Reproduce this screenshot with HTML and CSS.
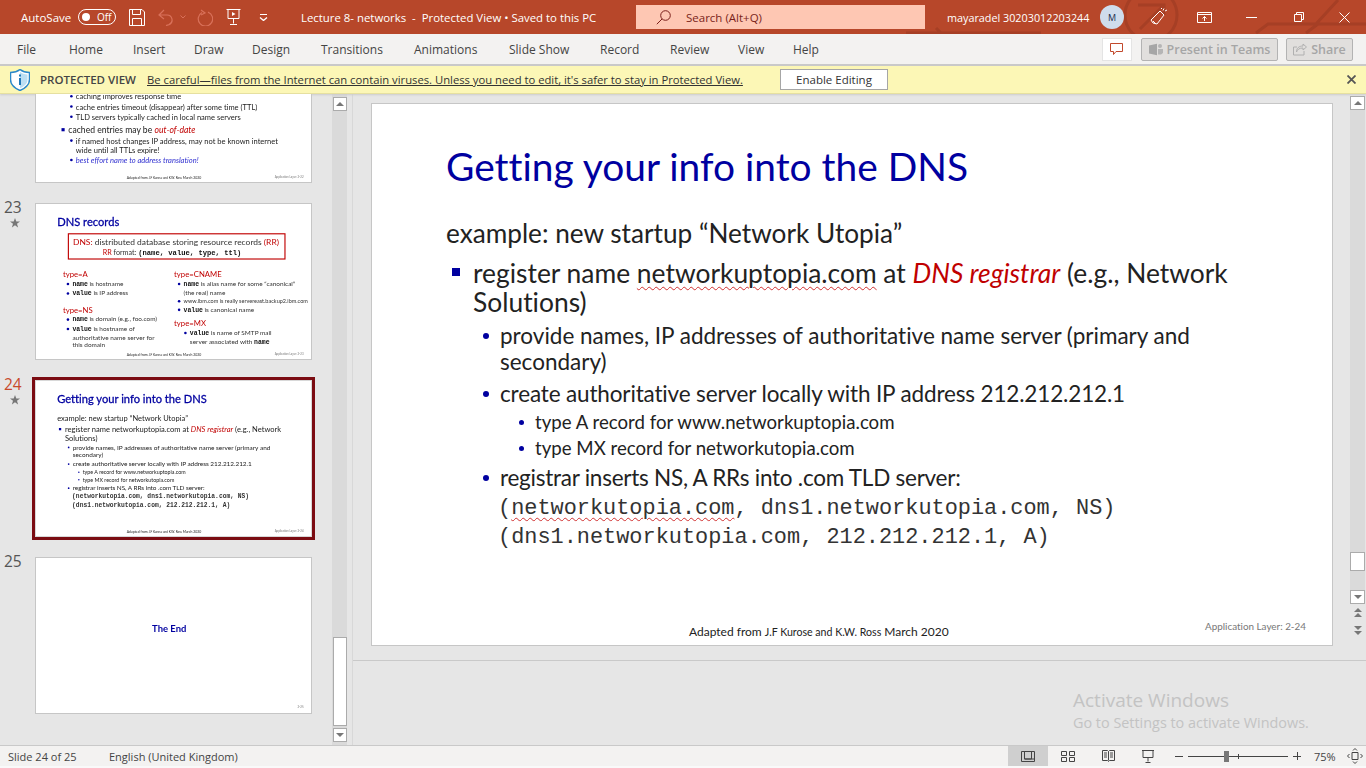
FILE: index.html
```html
<!DOCTYPE html>
<html lang="en">
<head>
<meta charset="utf-8">
<title>Lecture 8- networks</title>
<link rel="stylesheet" href="styles.css">
</head>
<body>
<div class="app">
  <header class="titlebar">
    <svg class="decor" width="460" height="34" viewBox="0 0 460 34" fill="none" stroke="#a63f25" stroke-width="3">
      <circle cx="245" cy="15" r="26"/>
      <path d="M232 5h26v10M256 7l-22 22"/>
      <path d="M0 33h135M30 28l5 5M350 33l12-9h48l22-24M400 33l12-9h48"/>
    </svg>
    <span class="autosave">AutoSave</span>
    <span class="toggle"><i class="knob"></i><span>Off</span></span>
    <svg class="ic save" width="16" height="17" viewBox="0 0 16 17" fill="none" stroke="#fff"><path d="M.5.5h12.5l2.500 2.500v13.500H.5zM3.500.500v5h8v-5M3.500 16.500v-7h9v7"/></svg>
    <svg class="ic undo" width="16" height="17" viewBox="0 0 16 17" fill="none" stroke="#d9715a" stroke-width="1.2"><path d="M6 1L1 6l5 4M1 6h8a5 5 0 0 1 2 9.600l-3 1"/></svg>
    <svg class="ic caret" width="6" height="4" viewBox="0 0 6 4" fill="none" stroke="#d9715a"><path d="M.5.500L3 3 5.500.500"/></svg>
    <svg class="ic redo" width="16" height="17" viewBox="0 0 16 17" fill="none" stroke="#d9715a" stroke-width="1.2"><path d="M4 1l4 3-4 2M5 3.500a7.200 7.200 0 1 0 6-.4"/></svg>
    <svg class="ic present" width="15" height="16" viewBox="0 0 15 16" fill="none" stroke="#fff"><path d="M.5 .5h14M2 .5v9h11v-9M7.500 9.500v5M4 15.500h7"/><path d="M6 3l3.500 2L6 7z" fill="#fff" stroke="none"/></svg>
    <svg class="ic more" width="9" height="7" viewBox="0 0 9 7" fill="none" stroke="#fff"><path d="M1 .5h7"/><path d="M1 3.500L4.500 6.500 8 3.500" stroke-width="1.300"/></svg>
    <span class="doc">Lecture 8- networks&nbsp; -&nbsp; Protected View • Saved to this PC</span>
    <div class="search">
      <svg width="15" height="15" viewBox="0 0 15 15" fill="none" stroke="#7a1f1a"><circle cx="9.500" cy="5.500" r="4.800"/><path d="M6 9L.8 14.200"/></svg>
      <span>Search (Alt+Q)</span>
    </div>
    <span class="user">mayaradel 30203012203244</span>
    <span class="avatar">M</span>
    <svg class="ic pen" width="18" height="18" viewBox="0 0 18 18" fill="none" stroke="#fff"><path d="M1 12l9-9 4 4-7 9-4-1zM3 13l3 3M11 1l1-1M15 3l2-1M14 .5l-1 2"/></svg>
    <svg class="ic display" width="15" height="11" viewBox="0 0 15 11" fill="none" stroke="#fff"><path d="M.5.500h14v10H.5zM.5 2.500h14M7.500 9V4.500M5.500 6.500l2-2 2 2"/></svg>
    <svg class="ic min" width="11" height="1" viewBox="0 0 11 1"><path d="M0 0h11v1H0z" fill="#fff"/></svg>
    <svg class="ic restore" width="10" height="10" viewBox="0 0 10 10" fill="none" stroke="#fff"><path d="M.5 2.500h7v7h-7zM2.500 2.500v-2h7v7h-2"/></svg>
    <svg class="ic close" width="11" height="11" viewBox="0 0 11 11" stroke="#fff" fill="none"><path d="M.5.500l10 10M10.500.500l-10 10"/></svg>
  </header>

  <nav class="ribbon">
    <span class="tab t-file">File</span>
    <span class="tab t-home">Home</span>
    <span class="tab t-insert">Insert</span>
    <span class="tab t-draw">Draw</span>
    <span class="tab t-design">Design</span>
    <span class="tab t-trans">Transitions</span>
    <span class="tab t-anim">Animations</span>
    <span class="tab t-show">Slide Show</span>
    <span class="tab t-record">Record</span>
    <span class="tab t-review">Review</span>
    <span class="tab t-view">View</span>
    <span class="tab t-help">Help</span>
    <span class="comment">
      <svg width="14" height="14" viewBox="0 0 14 14" fill="none" stroke="#c2492c"><path d="M.5 1.500h12v8H6l-2.500 3v-3H.5z"/></svg>
    </span>
    <span class="rbtn teams">
      <svg width="14" height="13" viewBox="0 0 14 13"><path d="M0 2.500l8-1.800v11.600L0 10.500z" fill="#a6a6a6"/><circle cx="11" cy="3" r="2" fill="#b5b5b5"/><path d="M9 6h5v4l-2 1.500H9z" fill="#b5b5b5"/></svg>
      Present in Teams
    </span>
    <span class="rbtn share">
      <svg width="14" height="13" viewBox="0 0 14 13" fill="none" stroke="#b0b0b0"><path d="M10 1l3.500 3L10 7V5C6 5 4.500 6.500 3.500 9 3.500 5 6 3 10 3zM11 8v4H.5V4H4"/></svg>
      Share
    </span>
  </nav>

  <div class="protected">
    <svg class="shield" width="20" height="22" viewBox="0 0 20 22"><path d="M10 .5c2.500 2 5.500 3 9.500 3v7c0 5-3.500 8.500-9.500 11C4 19 .5 15.500.5 10.500v-7c4 0 7-1 9.500-3z" fill="#fff" stroke="#2b88c9" stroke-width="1.500"/><path d="M10 3c2 1.500 4.500 2.300 7.500 2.500v5c0 3.800-2.700 6.700-7.500 8.700z" fill="#bcdff3"/><path d="M9 5.500h2v2H9zM9 9h2v7H9z" fill="#1f78b8"/></svg>
    <strong class="pv">PROTECTED VIEW</strong>
    <span class="pv-link">Be careful—files from the Internet can contain viruses. Unless you need to edit, it's safer to stay in Protected View.</span>
    <button class="enable" type="button">Enable Editing</button>
    <svg class="pv-x" width="9" height="9" viewBox="0 0 9 9" stroke="#555" stroke-width="1.800"><path d="M.5.500l8 8M8.500.500l-8 8"/></svg>
  </div>

  <main class="work">
    <aside class="panel">
      <div class="thumbs">
        <div class="row r22">
          <div class="num"></div>
          <div class="thumb"><div class="slide s22">
            <div class="l2">caching improves response time</div>
            <div class="l2">cache entries timeout (disappear) after some time (TTL)</div>
            <div class="l2">TLD servers typically cached in local name servers</div>
            <div class="l1s">cached entries may be <em class="red">out-of-date</em></div>
            <div class="l2">if named host changes IP address, may not be known internet<br>wide until all TTLs expire!</div>
            <div class="l2 blue"><em>best effort name to address translation!</em></div>
            <div class="foot">Adapted from <small>J.F Kurose and K.W. Ross</small> March 2020</div>
            <div class="page">Application Layer: 2-22</div>
          </div></div>
        </div>

        <div class="row">
          <div class="num">23<svg class="star" width="10" height="10" viewBox="0 0 10 10"><path d="M5 0l1.300 3.500H10L7 5.800 8.100 9.500 5 7.300 1.900 9.500 3 5.800 0 3.500h3.700z"/></svg></div>
          <div class="thumb"><div class="slide s23">
            <h2 class="title">DNS records</h2>
            <div class="rrbox">
              <div><span class="redt">DNS:</span> distributed database storing resource records <span class="redt">(RR)</span></div>
              <div class="fmt"><span class="redt">RR</span> format: <code>(name, value, type, ttl)</code></div>
            </div>
            <div class="cols">
              <div>
                <div class="ty">type=A</div>
                <div class="it"><code>name</code> is hostname</div>
                <div class="it"><code>value</code> is IP address</div>
                <div class="ty gap">type=NS</div>
                <div class="it"><code>name</code> is domain (e.g., foo.com)</div>
                <div class="it"><code>value</code> is hostname of<br>authoritative name server for<br>this domain</div>
              </div>
              <div>
                <div class="ty">type=CNAME</div>
                <div class="it"><code>name</code> is alias name for some “canonical”<br>(the real) name</div>
                <div class="it small">www.ibm.com is really servereast.backup2.ibm.com</div>
                <div class="it"><code>value</code> is canonical name</div>
                <div class="ty gap2">type=MX</div>
                <div class="it in"><code>value</code> is name of SMTP mail<br>server associated with <code>name</code></div>
              </div>
            </div>
            <div class="foot">Adapted from <small>J.F Kurose and K.W. Ross</small> March 2020</div>
            <div class="page">Application Layer: 2-23</div>
          </div></div>
        </div>

        <div class="row sel">
          <div class="num cur">24<svg class="star" width="10" height="10" viewBox="0 0 10 10"><path d="M5 0l1.300 3.500H10L7 5.800 8.100 9.500 5 7.300 1.900 9.500 3 5.800 0 3.500h3.700z"/></svg></div>
          <div class="thumb"><div class="slide">
            <h2 class="title">Getting your info into the DNS</h2>
            <div class="lead">example: new startup “Network Utopia”</div>
            <div class="b1">register name networkuptopia.com at <em class="red">DNS registrar</em> (e.g., Network<br>Solutions)</div>
            <div class="b2 m6">provide names, IP addresses of authoritative name server (primary and<br>secondary)</div>
            <div class="b2 m6 tight1">create authoritative server locally with IP address 212.212.212.1</div>
            <div class="b3 m4">type A record for www.networkuptopia.com</div>
            <div class="b3">type MX record for networkutopia.com</div>
            <div class="b2 m45 tight2">registrar inserts NS, A RRs into .com TLD server:</div>
            <div class="mono first">(networkutopia.com, dns1.networkutopia.com, NS)</div>
            <div class="mono">(dns1.networkutopia.com, 212.212.212.1, A)</div>
            <div class="foot">Adapted from <small>J.F Kurose and K.W. Ross</small> March 2020</div>
            <div class="page">Application Layer: 2-24</div>
          </div></div>
        </div>

        <div class="row">
          <div class="num">25</div>
          <div class="thumb"><div class="slide s25">
            <div class="end">The End</div>
            <div class="page">2-25</div>
          </div></div>
        </div>
      </div>
      <div class="sbar left">
        <span class="sb up"><i class="tri"></i></span>
        <span class="grip"></span>
        <span class="sb dn"><i class="tri d"></i></span>
      </div>
    </aside>

    <section class="editor">
      <div class="stage">
        <div class="slide big">
          <h1 class="title">Getting your info into the DNS</h1>
          <div class="lead">example: new startup “Network Utopia”</div>
          <div class="b1">register name <u class="sp">networkuptopia.com</u> at <em class="red">DNS registrar</em> (e.g., Network<br>Solutions)</div>
          <div class="b2 m6">provide names, IP addresses of authoritative name server (primary and<br>secondary)</div>
          <div class="b2 m6 tight1">create authoritative server locally with IP address 212.212.212.1</div>
          <div class="b3 m4">type A record for www.networkuptopia.com</div>
          <div class="b3">type MX record for networkutopia.com</div>
          <div class="b2 m45 tight2">registrar inserts NS, A RRs into .com TLD server:</div>
          <div class="mono first">(<u class="sp">networkutopia.com</u>, dns1.networkutopia.com, NS)</div>
          <div class="mono">(dns1.networkutopia.com, 212.212.212.1, A)</div>
          <div class="foot">Adapted from <small>J.F Kurose and K.W. Ross</small> March 2020</div>
          <div class="page">Application Layer: 2-24</div>
        </div>
        <div class="sbar right">
          <div class="track">
            <span class="sb up"><i class="tri"></i></span>
            <span class="grip"></span>
            <span class="sb dn"><i class="tri d"></i></span>
          </div>
          <span class="pg"><i class="tri"></i><i class="tri"></i></span>
          <span class="pg"><i class="tri d"></i><i class="tri d"></i></span>
        </div>
      </div>
      <div class="notes"></div>
      <div class="activate">
        <div class="a1">Activate Windows</div>
        <div class="a2">Go to Settings to activate Windows.</div>
      </div>
    </section>
  </main>

  <footer class="status">
    <span class="st-a">Slide 24 of 25</span>
    <span class="st-b">English (United Kingdom)</span>
    <span class="vbtn on"><svg width="14" height="11" viewBox="0 0 14 11" fill="none" stroke="#444"><path d="M.5.500h13v10H.5zM3.500.500v7.500h7V.500M3.500 8h10"/></svg></span>
    <span class="vbtn"><svg width="14" height="11" viewBox="0 0 14 11" fill="none" stroke="#444"><path d="M.5.500h5v4h-5zM8.500.500h5v4h-5zM.5 6.500h5v4h-5zM8.500 6.500h5v4h-5z"/></svg></span>
    <span class="vbtn"><svg width="13" height="12" viewBox="0 0 13 12" fill="none" stroke="#444"><path d="M.5.500h5l1 1 1-1h5v10h-5l-1 1-1-1h-5zM6.500 1.500v9M2 3h3M2 5h3M2 7h3M8 3h3M8 5h3M8 7h3"/></svg></span>
    <span class="vbtn"><svg width="12" height="13" viewBox="0 0 12 13" fill="none" stroke="#444"><path d="M0 .5h12M1 .5v7h10v-7M6 7.500v4M3.500 12.500h5"/></svg></span>
    <span class="zminus"></span>
    <span class="slider"><i class="mid"></i><i class="handle"></i></span>
    <span class="zplus"></span>
    <span class="pct">75%</span>
    <svg class="fit" width="16" height="16" viewBox="0 0 16 16" fill="none" stroke="#444"><path d="M5 4.500h6v7H5zM6 2.500l2-2 2 2M6 13.500l2 2 2-2M2.500 6l-2 2 2 2M13.500 6l2 2-2 2"/></svg>
  </footer>
</div>
</body>
</html>
```
FILE: styles.css
```css
* { box-sizing: border-box; }
html, body { margin: 0; height: 100%; overflow: hidden; }
body { font-family: "Open Sans", "Noto Sans", sans-serif; font-size: 12px; color: #444; }
.app { width: 1366px; height: 768px; display: flex; flex-direction: column; background: #e6e6e6; }
svg { display: block; flex: none; }

/* title bar */
.titlebar { position: relative; height: 34px; flex: none; display: flex; align-items: center; background: #b7472a; color: #fff; font-size: 11.5px; overflow: hidden; }
.decor { position: absolute; top: 0; left: 906px; }
.titlebar > *:not(.decor) { position: relative; }
.autosave { margin-left: 21px; width: 50px; white-space: nowrap; }
.toggle { margin-left: 7px; width: 38px; height: 16px; border: 1px solid #fff; border-radius: 8px; display: flex; align-items: center; font-size: 10px; padding-left: 3px; }
.knob { width: 8px; height: 8px; background: #fff; border-radius: 50%; margin-right: 7px; }
.save { margin-left: 13px; }
.undo { margin-left: 13px; }
.caret { margin-left: 6px; }
.redo { margin-left: 11px; }
.present { margin-left: 13px; }
.more { margin-left: 18px; }
.doc { margin-left: 33px; width: 335px; white-space: nowrap; font-size: 11.4px; }
.search { width: 289px; height: 24px; background: #fec7b3; display: flex; align-items: center; gap: 15px; padding-left: 20px; color: #7a1f1a; font-size: 11.5px; }
.user { margin-left: 22px; width: 142px; white-space: nowrap; font-size: 10.8px; }
.avatar { margin-left: 11px; width: 24px; height: 24px; border-radius: 50%; background: #cfdcec; color: #1c2c4c; font-size: 9px; display: flex; align-items: center; justify-content: center; }
.pen { margin-left: 26px; }
.display { margin-left: 29px; }
.min { margin-left: 34px; }
.restore { margin-left: 37px; }
.close { margin-left: 35px; }

/* ribbon */
.ribbon { height: 32px; flex: none; display: flex; align-items: center; background: #f3f2f1; border-bottom: 2px solid #c9c9c9; color: #444; font-size: 12px; }
.tab { white-space: nowrap; display: block; }
.t-file { margin-left: 17px; width: 52px; }
.t-home { width: 64px; }
.t-insert { width: 61px; }
.t-draw { width: 58px; }
.t-design { width: 69px; }
.t-trans { width: 93px; }
.t-anim { width: 95px; }
.t-show { width: 91px; }
.t-record { width: 70px; }
.t-review { width: 68px; }
.t-view { width: 55px; }
.t-help { width: 309px; }
.comment { width: 30px; height: 23px; background: #fff; border: 1px solid #e4e4e4; display: flex; align-items: center; justify-content: center; }
.rbtn { height: 23px; background: #e1dfdd; border: 1px solid #b3b3b3; border-radius: 2px; color: #a6a6a6; display: flex; align-items: center; justify-content: center; gap: 4px; font-size: 12.5px; font-weight: 600; white-space: nowrap; }
.teams { margin-left: 9px; width: 137px; }
.share { margin-left: 8px; width: 67px; }

/* protected view */
.protected { height: 28px; flex: none; display: flex; align-items: center; background: #fcf7b6; border-bottom: 1px solid #e6e0a0; box-shadow: 0 1px 2px #ccc; color: #333; position: relative; }
.shield { margin-left: 10px; }
.pv { margin-left: 10px; width: 107px; font-weight: 600; font-size: 11.5px; color: #444; white-space: nowrap; }
.pv-link { width: 633px; font-size: 11.26px; white-space: nowrap; text-decoration: underline; color: #333; }
.enable { width: 108px; height: 21px; background: #fff; border: 1px solid #a6a6a6; color: #333; font: 11.5px "Open Sans", sans-serif; padding: 0; }
.pv-x { margin-left: 459px; }

/* workspace */
.work { flex: 1; min-height: 0; display: flex; }
.panel { width: 353px; flex: none; display: flex; border-right: 1px solid #d8d8d8; }
.thumbs { width: 332px; flex: none; overflow: hidden; }
.row { position: relative; display: flex; margin-bottom: 20px; height: 157px; }
.r22 { margin-top: -68px; }
.num { width: 36px; flex: none; margin-top: -4px; padding: 0 0 0 4px; font-size: 15.5px; line-height: 17px; color: #555; position: relative; }
.num.cur { color: #c8492c; }
.star { margin: 2px 0 0 6px; fill: #777; }
.thumb { width: 275px; height: 155px; margin-top: 1px; flex: none; background: #fff; box-shadow: 0 0 0 1px #c6c6c6; overflow: hidden; }
.sel .thumb { box-shadow: 0 0 0 1px #d8d8d8, 0 0 0 4px #7b0c12; }
.thumb .slide { transform: scale(.2865); transform-origin: 0 0; filter: blur(1.2px); }
.thumb .title { -webkit-text-stroke: 1px #0000a0; }
.thumb .mono { font-weight: 700; }

/* scrollbars */
.sbar { display: flex; flex-direction: column; align-items: center; background: #dadada; }
.sbar.left { width: 15px; }
.sb { width: 14px; height: 14px; background: #fff; border: 1px solid #ababab; display: flex; align-items: center; justify-content: center; flex: none; }
.left .up { margin-top: 3px; }
.left .grip { margin-top: auto; width: 14px; height: 89px; background: #fff; border: 1px solid #ababab; }
.left .dn { margin-top: 2px; margin-bottom: 3px; }
.tri { display: block; width: 0; height: 0; border-left: 4px solid transparent; border-right: 4px solid transparent; border-bottom: 4px solid #777; }
.tri.d { border-bottom: 0; border-top: 4px solid #777; }

/* editor */
.editor { flex: 1; min-width: 0; position: relative; display: flex; flex-direction: column; }
.stage { height: 566px; flex: none; display: flex; padding: 10px 0 0 19px; }
.notes { border-top: 1px solid #c9c9c9; flex: 1; }
.sbar.right { width: 15px; margin: -8px 0 0 18px; height: 555px; background: none; }
.track { width: 15px; height: 508px; display: flex; flex-direction: column; background: #dadada; flex: none; }
.right .sb { width: 15px; }
.right .grip { margin-top: 442px; width: 15px; height: 19px; background: #fff; border: 1px solid #ababab; flex: none; }
.right .dn { margin-top: 19px; }
.pg { display: block; margin-top: 4px; height: 10px; flex: none; }
.pg + .pg { margin-top: 8px; }
.pg .tri { margin-bottom: 1px; }
.activate { position: absolute; left: 720px; top: 594px; color: #c3c3c3; white-space: nowrap; }
.a1 { font-size: 19px; line-height: 24px; }
.a2 { font-size: 14.4px; line-height: 21px; }

/* slide */
.slide { position: relative; width: 960px; height: 541px; flex: none; background: #fff; color: #222; font-family: Lato, "Open Sans", sans-serif; white-space: nowrap; font-variant-ligatures: none; }
.big { box-shadow: 0 0 0 1px #c6c6c6; }
.title { margin: 0; padding: 38px 0 0 74px; height: 87px; font-size: 38.9px; line-height: 48px; font-weight: 400; color: #0000a0; }
.lead { margin: 28px 0 0 74px; font-size: 26.2px; line-height: 29px; }
.b1, .b2, .b3, .mono { position: relative; }
.b1 { margin: 11px 0 0 101px; font-size: 26.4px; line-height: 29px; }
.b1::before { content: ""; position: absolute; left: -21px; top: 9px; width: 8px; height: 8px; background: #0000a0; }
.b2 { margin: 5px 0 0 128px; font-size: 22.5px; line-height: 26px; }
.m6 { margin-top: 6px; }
.m45 { margin-top: 4.5px; }
.tight1 { letter-spacing: -.15px; }
.tight2 { letter-spacing: -.25px; }
.b2::before { content: ""; position: absolute; left: -17px; top: 10px; width: 6px; height: 6px; border-radius: 50%; background: #0000a0; }
.b3 { margin: 3px 0 0 163px; font-size: 18.65px; line-height: 23px; }
.m4 { margin-top: 4px; }
.b3::before { content: ""; position: absolute; left: -16px; top: 9px; width: 5px; height: 5px; border-radius: 50%; background: #0000a0; }
.mono { margin-left: 126px; font-family: "Liberation Mono", monospace; font-size: 21.9px; line-height: 29px; color: #333; }
.first { margin-top: 3px; }
.red { color: #c00000; }
.sp { text-decoration: underline wavy #d03030 1px; text-underline-offset: 3px; }
.foot { position: absolute; left: 317px; top: 519px; font-size: 12px; line-height: 18px; color: #222; }
.foot small { font-size: 10.6px; }
.page { position: absolute; right: 26px; top: 515px; font-size: 9.9px; line-height: 14px; color: #777; }

/* other thumbnails */
.s22 { padding-top: 222px; }
.s22 .l2 { position: relative; margin-left: 139px; font-size: 26.3px; line-height: 32px; margin-top: 4px; }
.s22 .l2::before, .s23 .it::before { content: ""; position: absolute; left: -20px; top: 11px; width: 9px; height: 9px; border-radius: 50%; background: #0000a0; }
.s22 .l1s { position: relative; margin: 11px 0 0 113px; font-size: 30px; line-height: 36px; }
.s22 .l1s::before { content: ""; position: absolute; left: -24px; top: 12px; width: 11px; height: 11px; background: #0000a0; }
.blue { color: #3030d0; }
.s23 .title { height: 80px; }
.rrbox { margin: 22px 0 0 111px; width: 760px; height: 92px; border: 4px solid #c00000; padding: 8px 14px; font-size: 29.5px; line-height: 36px; color: #333; }
.redt { color: #c00000; }
.fmt { margin-left: 104px; font-size: 25px; }
code { font-family: "Liberation Mono", monospace; font-weight: 700; font-size: 1em; color: #111; }
.cols { display: grid; grid-template-columns: 388px 1fr; margin: 35px 0 0 94px; }
.ty { font-size: 27px; line-height: 32px; color: #c00000; }
.gap { margin-top: 26px; }
.gap2 { margin-top: 16px; }
.it { position: relative; margin-left: 33px; font-size: 22.5px; line-height: 27px; margin-top: 3px; color: #333; }
.it.small { font-size: 19.3px; }
.it.in { margin-left: 55px; }
.end { position: absolute; left: 0; width: 930px; top: 225px; text-align: center; font-size: 33px; line-height: 44px; font-weight: 700; color: #0000a0; }
.s25 .page { right: 26px; top: 512px; }

/* status bar */
.status { height: 23px; flex: none; display: flex; align-items: center; background: #f3f2f1; border-top: 1px solid #c9c9c9; border-bottom: 2px solid #f9f9f9; font-size: 11px; color: #444; white-space: nowrap; }
.st-a { margin-left: 8px; width: 101px; }
.st-b { width: 899px; }
.vbtn { width: 40px; height: 20px; display: flex; align-items: center; justify-content: center; flex: none; }
.vbtn.on { background: #cfcfcf; }
.zminus { width: 8px; height: 1px; background: #444; margin-left: 7px; }
.slider { position: relative; margin-left: 5px; width: 100px; height: 1px; background: #444; }
.mid { position: absolute; left: 50px; top: -2px; width: 1px; height: 5px; background: #444; }
.handle { position: absolute; left: 36px; top: -5px; width: 5px; height: 11px; background: #777; }
.zplus { position: relative; margin-left: 5px; width: 8px; height: 1px; background: #444; }
.zplus::after { content: ""; position: absolute; left: 3.500px; top: -3.500px; width: 1px; height: 8px; background: #444; }
.pct { margin-left: 13px; width: 33px; font-size: 11px; }
```
